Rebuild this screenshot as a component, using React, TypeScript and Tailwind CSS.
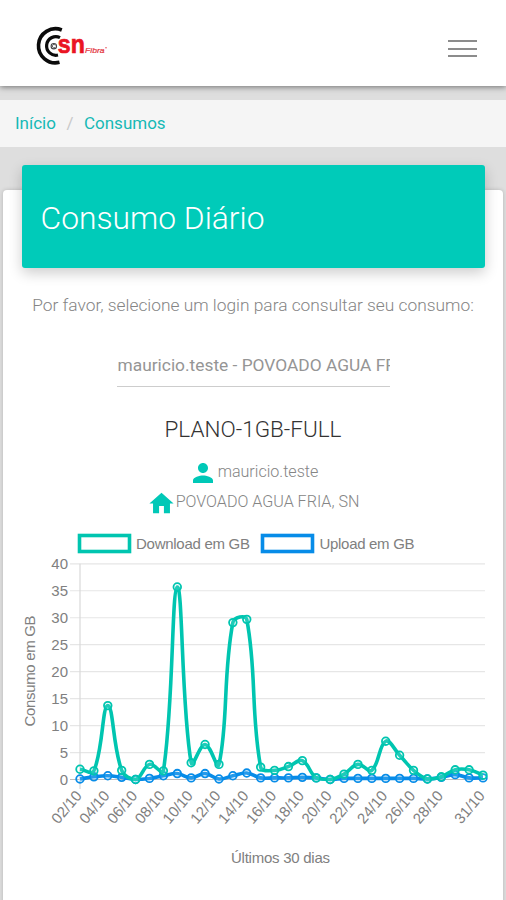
import React from 'react';
import { MdHome, MdPerson } from 'react-icons/md';

interface Point {
  x: number;
  y: number;
}

const download = [
  1.9, 1.6, 13.7, 1.7, 0, 2.8, 1.6, 35.7, 3.1, 6.5, 2.8, 29.1, 29.7, 2.3, 1.7,
  2.4, 3.5, 0.3, 0, 1, 2.8, 1.7, 7.1, 4.5, 1.7, 0.1, 0.5, 1.8, 1.8, 0.8,
];
const upload = [
  0.1, 0.5, 0.7, 0.4, 0, 0.2, 0.7, 1.1, 0.3, 1.1, 0.1, 0.7, 1.2, 0.3, 0.3,
  0.3, 0.4, 0.3, 0, 0.2, 0.2, 0.2, 0.2, 0.2, 0.2, 0.1, 0.4, 0.9, 0.3, 0.3,
];

const ticks = [0, 5, 10, 15, 20, 25, 30, 35, 40];
const dayIndexes = [0, 2, 4, 6, 8, 10, 12, 14, 16, 18, 20, 22, 24, 26, 29];

// Plot area
const LEFT = 80;
const RIGHT = 483;
const TOP = 39.8;
const BOTTOM = 255.5;

const yAt = (value: number) => BOTTOM - (value / 40) * (BOTTOM - TOP);
const xAt = (index: number) => LEFT + (index * (RIGHT - LEFT)) / 29;
const toPoints = (values: number[]): Point[] =>
  values.map((v, i) => ({ x: xAt(i), y: yAt(v) }));
const clampY = (y: number) => Math.min(BOTTOM, Math.max(TOP, y));

// Bezier spline with 0.4 tension, control points kept inside the plot area
const splinePath = (pts: Point[]) => {
  const controls = pts.map((p, i) => {
    const prev = pts[i - 1] || p;
    const next = pts[i + 1] || p;
    const d1 = Math.hypot(p.x - prev.x, p.y - prev.y);
    const d2 = Math.hypot(next.x - p.x, next.y - p.y);
    const a = (0.4 * d1) / (d1 + d2);
    const b = (0.4 * d2) / (d1 + d2);
    return {
      inX: p.x - a * (next.x - prev.x),
      inY: clampY(p.y - a * (next.y - prev.y)),
      outX: p.x + b * (next.x - prev.x),
      outY: clampY(p.y + b * (next.y - prev.y)),
    };
  });
  return pts
    .map((p, i) => {
      if (i === 0) return `M${p.x} ${p.y}`;
      const from = controls[i - 1];
      const to = controls[i];
      return `C${from.outX} ${from.outY} ${to.inX} ${to.inY} ${p.x} ${p.y}`;
    })
    .join(' ');
};

const Series: React.FC<{ values: number[]; color: string }> = ({ values, color }) => {
  const pts = toPoints(values);
  return (
    <g fill="none" stroke={color}>
      <path d={splinePath(pts)} strokeWidth="3.6" strokeLinejoin="round" />
      {pts.map((p) => (
        <circle key={p.x} cx={p.x} cy={p.y} r="3.8" strokeWidth="1.8" fill="#fff" fillOpacity="0.12" />
      ))}
    </g>
  );
};

const Logo = () => (
  <svg className="h-12 w-20" viewBox="32 22 80 48">
    <g fill="none" stroke="#0b0b0b">
      <path d="M62.8 30 A17 17 0 1 0 60.5 62.3" strokeWidth="3.6" />
      <path d="M61 37.6 A9.3 9.3 0 1 0 59 55" strokeWidth="3.2" />
      <circle cx="54.8" cy="46.2" r="2.7" stroke="#444" strokeWidth="1.1" />
      <path d="M56.2 45.2 A1.6 1.6 0 1 0 55.8 47.4" stroke="#444" strokeWidth="0.9" />
    </g>
    <text
      x="58.8"
      y="52.8"
      textLength="27"
      lengthAdjust="spacingAndGlyphs"
      className="fill-[#ea1523] stroke-[#ea1523] stroke-[0.7] font-['Liberation_Sans',sans-serif] text-[25px] font-bold"
    >
      sn
    </text>
    <text
      x="86"
      y="52.8"
      textLength="19.5"
      lengthAdjust="spacingAndGlyphs"
      className="fill-[#e3323c] stroke-[#e3323c] stroke-[0.2] font-['Liberation_Sans',sans-serif] text-[8px] italic"
    >
      Fibra
    </text>
    <circle cx="107" cy="47.8" r="0.7" className="fill-[#e3323c]" />
  </svg>
);

const UsageChart = () => (
  <svg
    className="mt-[4.5px] block h-[371px] w-full fill-[#808080] font-['Liberation_Sans',sans-serif] text-[15px]"
    viewBox="3 0 500 371"
  >
    {/* Legend */}
    <rect x="79.5" y="11.5" width="50" height="16" fill="none" stroke="#00c5b0" strokeWidth="3.6" />
    <text x="136" y="24.5" textLength="114">Download em GB</text>
    <rect x="262.5" y="11.5" width="50" height="16" fill="none" stroke="#078ce8" strokeWidth="3.6" />
    <text x="319.5" y="24.5" textLength="95">Upload em GB</text>

    {/* Grid */}
    {ticks.map((tick) => (
      <g key={tick}>
        <path
          d={`M70 ${yAt(tick)} H485`}
          stroke={tick === 0 ? '#bdbdbd' : '#e6e6e6'}
          strokeWidth="1.2"
        />
        <text x="68" y={yAt(tick) + 5} textAnchor="end">
          {tick}
        </text>
      </g>
    ))}
    <path d={`M80 ${TOP} V265`} stroke="#d9d9d9" strokeWidth="1.2" />

    <Series values={upload} color="#078ce8" />
    <Series values={download} color="#00c5b0" />

    {/* Axis labels */}
    {dayIndexes.map((day) => (
      <text
        key={day}
        textAnchor="end"
        transform={`translate(${xAt(day) + 2.5} 272) rotate(-50)`}
      >
        {String(day + 2).padStart(2, '0')}/10
      </text>
    ))}
    <text textAnchor="middle" textLength="111" transform="translate(34.5 147) rotate(-90)">
      Consumo em GB
    </text>
    <text x="280.5" y="338.5" textAnchor="middle" textLength="99">
      Últimos 30 dias
    </text>
  </svg>
);

const App: React.FC = () => {
  return (
    <div className="h-[900px] w-full overflow-hidden bg-[#dedede] font-[Roboto,sans-serif]">
      <header className="relative flex h-[86px] items-center justify-between bg-white pr-[29px] pb-[7px] pl-[31px] shadow-[0_1px_6px_rgba(0,0,0,0.5)]">
        <div className="pt-3">
          <Logo />
        </div>
        <button aria-label="Menu" className="flex flex-col gap-[5.5px] pt-[18px]">
          <span className="h-0.5 w-[29px] bg-[#8c8c8c]" />
          <span className="h-0.5 w-[29px] bg-[#8c8c8c]" />
          <span className="h-0.5 w-[29px] bg-[#8c8c8c]" />
        </button>
      </header>

      <nav className="mt-3.5 flex h-[47px] items-center bg-[#f5f5f5] pl-[15px] text-[17px] text-[#16b9b5]">
        <a>Início</a>
        <span className="w-7 text-center text-[#c9c9c9]">/</span>
        <a>Consumos</a>
      </nav>

      <main className="mx-[3px] mt-[43px] flow-root h-[740px] rounded-t bg-white shadow-[0_0_4px_rgba(0,0,0,0.18)]">
        <div className="relative mx-[18.5px] -mt-[25px] flex h-[103px] items-center rounded-[3px] bg-[#00cbb9] px-5 pt-[5px] shadow-[0_5px_14px_rgba(0,0,0,0.2)]">
          <h1 className="-ml-px text-[31.8px] font-light text-white">
            Consumo Diário
          </h1>
        </div>

        <p className="mt-[25px] text-center text-[17.35px] leading-6 font-light whitespace-nowrap text-[#858585]">
          Por favor, selecione um login para consultar seu consumo:
        </p>

        <div className="mx-auto mt-9 h-[34px] w-[273px] overflow-hidden border-b border-[#cdcdcd] pl-px text-[17.35px] leading-6 whitespace-nowrap text-[#959595]">
          mauricio.teste - POVOADO AGUA FRIA, SN
        </div>

        <h2 className="mt-[26px] text-center text-[22.5px] leading-8 font-light text-[#333]">
          PLANO-1GB-FULL
        </h2>
        <div className="mt-3.5 flex h-[30px] items-center justify-center text-[16.1px] font-light text-[#858585]">
          <MdPerson size={30} className="-mt-0.5 text-[#00c8b7]" />
          <span className="-mt-1">mauricio.teste</span>
        </div>
        <div className="flex h-[30px] items-center justify-center text-[16.1px] font-light text-[#858585]">
          <MdHome size={29} className="-mt-0.5 text-[#00c8b7]" />
          <span className="-mt-1">POVOADO AGUA FRIA, SN</span>
        </div>
        <UsageChart />
      </main>
    </div>
  );
};

export default App;
